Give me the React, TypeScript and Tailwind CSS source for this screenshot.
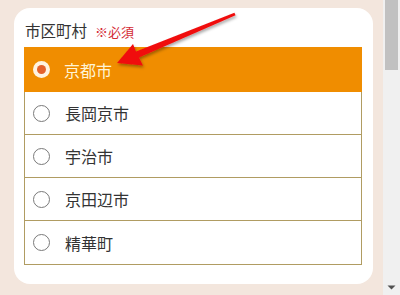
import React from "react";

const rows = ["京都市", "長岡京市", "宇治市", "京田辺市", "精華町"];

export default function App() {
  return (
    <div
      className="relative flex w-[400px] h-[295px] overflow-hidden bg-[#f3e6dd]"
      style={{ fontFamily: '"Noto Sans CJK JP", "Noto Sans", sans-serif' }}
    >
      <div className="flex-1 pl-[14px] pt-[8px]">
        <div className="w-[359px] h-[276px] bg-white rounded-[16px] pl-[10px] pr-[11px] pt-[10px]">
          <div className="flex items-center h-[26px] mb-[3px] pl-[1px]">
            <span className="text-[15.5px] text-[#333] leading-none">市区町村</span>
            <span className="ml-[8px] text-[13px] text-[#d42a35] leading-none">※必須</span>
          </div>
          <div className="border-x border-b border-[#b09c62]">
            {rows.map((r, i) =>
              i === 0 ? (
                <div
                  key={r}
                  className="flex items-center h-[45px] bg-[#f08d00] -mx-px px-[9px]"
                >
                  <span className="flex items-center justify-center w-[17px] h-[17px] rounded-full bg-[#fff3e0]">
                    <span className="w-[9px] h-[9px] rounded-full bg-[#e4622c]" />
                  </span>
                  <span className="ml-[14px] text-[16px] text-[#fff4d6]">{r}</span>
                </div>
              ) : (
                <div
                  key={r}
                  className={
                    "flex items-center h-[43px] px-[8px] bg-white " +
                    (i < rows.length - 1 ? "border-b border-[#b09c62]" : "")
                  }
                >
                  <span className="w-[17px] h-[17px] rounded-full border border-[#7a7a7a] bg-white" />
                  <span className="ml-[15px] text-[16px] text-[#333]">{r}</span>
                </div>
              )
            )}
          </div>
        </div>
      </div>
      <div className="relative w-[17px] h-full bg-[#f0f0f0]">
        <div className="ml-[2px] w-[13px] h-[70px] bg-[#c1c1c1]" />
        <svg className="absolute left-[4px] bottom-[5px]" width="9" height="5" viewBox="0 0 9 5">
          <polygon points="0.5,0.5 8.5,0.5 4.5,4.5" fill="#505050" />
        </svg>
      </div>
      <svg
        className="absolute inset-0 pointer-events-none"
        width="400"
        height="295"
        viewBox="0 0 400 295"
      >
        <defs>
          <filter id="sh" x="-20%" y="-50%" width="140%" height="200%">
            <feDropShadow dx="1" dy="2" stdDeviation="1.5" floodColor="#000" floodOpacity="0.35" />
          </filter>
        </defs>
        <polygon
          filter="url(#sh)"
          points="117,63 143,65.5 139,57.5 235.6,15.2 234.4,12.8 136,51.5 133,44"
          fill="#f01010"
        />
      </svg>
    </div>
  );
}
